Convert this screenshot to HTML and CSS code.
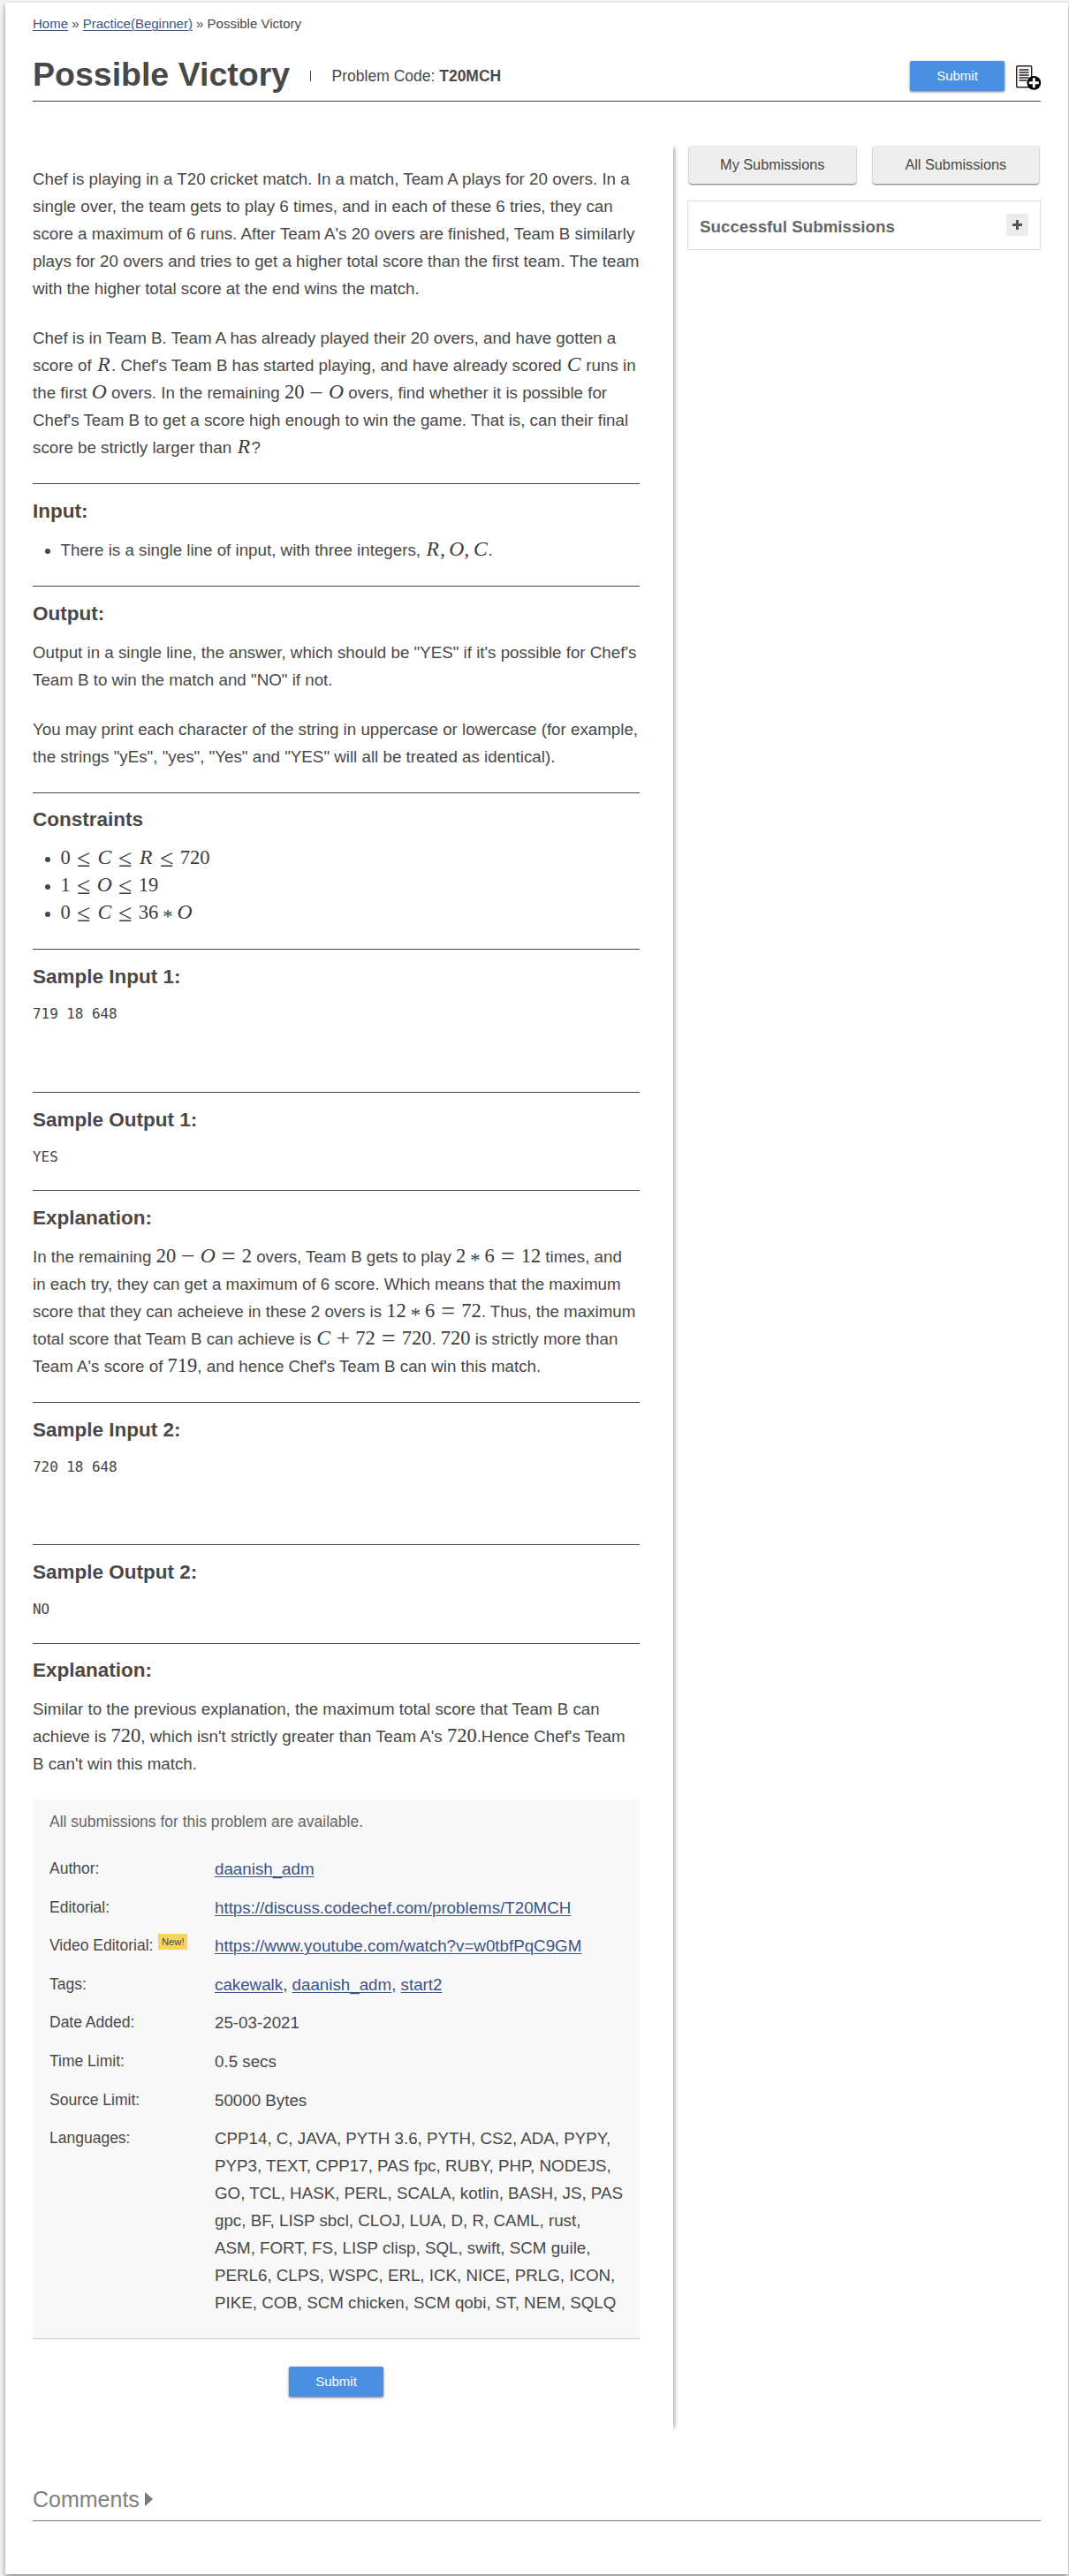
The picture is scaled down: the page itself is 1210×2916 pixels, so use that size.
FILE: index.html
```html
<!DOCTYPE html>
<html lang="en">
<head>
<meta charset="utf-8">
<title>Possible Victory | Practice</title>
<link rel="stylesheet" href="styles.css">
</head>
<body>
<div class="page">
  <nav class="breadcrumb"><a href="#">Home</a> » <a href="#">Practice(Beginner)</a> » Possible Victory</nav>
  <header class="title-bar">
    <h1>Possible Victory</h1>
    <span class="separator"></span>
    <span class="code">Problem Code: <b>T20MCH</b></span>
    <a class="submit">Submit</a>
    <svg class="todo" width="30" height="30" viewBox="0 0 30 30">
      <rect x="1.7" y="1.7" width="17" height="24" rx="1" fill="#fff" stroke="#222" stroke-width="1.4"/>
      <path d="M4.5 6h11M4.5 9h11M4.5 12h11M4.5 15h11M4.5 18h9" stroke="#222" stroke-width="1.5"/>
      <circle cx="21.3" cy="20.8" r="7.9" fill="#000"/>
      <path d="M21.3 15.3v11M15.8 20.8h11" stroke="#fff" stroke-width="3"/>
    </svg>
  </header>
  <div class="columns">
    <main class="problem">
      <div class="intro">
        <p>Chef is playing in a T20 cricket match. In a match, Team A plays for 20 overs. In a<br>single over, the team gets to play 6 times, and in each of these 6 tries, they can<br>score a maximum of 6 runs. After Team A's 20 overs are finished, Team B similarly<br>plays for 20 overs and tries to get a higher total score than the first team. The team<br>with the higher total score at the end wins the match.</p>
        <p>Chef is in Team B. Team A has already played their 20 overs, and have gotten a<br>score of <span class="math"><i>R</i></span>. Chef's Team B has started playing, and have already scored <span class="math"><i>C</i></span> runs in<br>the first <span class="math"><i>O</i></span> overs. In the remaining <span class="math">20<s>−</s><i>O</i></span> overs, find whether it is possible for<br>Chef's Team B to get a score high enough to win the game. That is, can their final<br>score be strictly larger than <span class="math"><i>R</i></span>?</p>
      </div>
      <section>
        <h3>Input:</h3>
        <ul><li>There is a single line of input, with three integers, <span class="math"><i>R</i><u>,</u><i>O</i><u>,</u><i>C</i></span>.</li></ul>
      </section>
      <section>
        <h3>Output:</h3>
        <p>Output in a single line, the answer, which should be "YES" if it's possible for Chef's<br>Team B to win the match and "NO" if not.</p>
        <p>You may print each character of the string in uppercase or lowercase (for example,<br>the strings "yEs", "yes", "Yes" and "YES" will all be treated as identical).</p>
      </section>
      <section>
        <h3>Constraints</h3>
        <ul>
          <li><span class="math">0<em>≤</em><i>C</i><em>≤</em><i>R</i><em>≤</em>720</span></li>
          <li><span class="math">1<em>≤</em><i>O</i><em>≤</em>19</span></li>
          <li><span class="math">0<em>≤</em><i>C</i><em>≤</em>36<b>*</b><i>O</i></span></li>
        </ul>
      </section>
      <section>
        <h3>Sample Input 1:</h3>
        <pre class="sample-in">719 18 648</pre>
      </section>
      <section>
        <h3>Sample Output 1:</h3>
        <pre class="sample-out">YES</pre>
      </section>
      <section>
        <h3>Explanation:</h3>
        <p>In the remaining <span class="math">20<s>−</s><i>O</i><em>=</em>2</span> overs, Team B gets to play <span class="math">2<b>*</b>6<em>=</em>12</span> times, and<br>in each try, they can get a maximum of 6 score. Which means that the maximum<br>score that they can acheieve in these 2 overs is <span class="math">12<b>*</b>6<em>=</em>72</span>. Thus, the maximum<br>total score that Team B can achieve is <span class="math"><i>C</i><s>+</s>72<em>=</em>720</span>. <span class="math">720</span> is strictly more than<br>Team A's score of <span class="math">719</span>, and hence Chef's Team B can win this match.</p>
      </section>
      <section>
        <h3>Sample Input 2:</h3>
        <pre class="sample-in">720 18 648</pre>
      </section>
      <section>
        <h3>Sample Output 2:</h3>
        <pre class="sample-out">NO</pre>
      </section>
      <section>
        <h3>Explanation:</h3>
        <p>Similar to the previous explanation, the maximum total score that Team B can<br>achieve is <span class="math">720</span>, which isn't strictly greater than Team A's <span class="math">720</span>.Hence Chef's Team<br>B can't win this match.</p>
      </section>
      <div class="info">
        <div class="note">All submissions for this problem are available.</div>
        <dl>
          <dt>Author:</dt><dd><a href="#">daanish_adm</a></dd>
          <dt>Editorial:</dt><dd><a href="#">https://discuss.codechef.com/problems/T20MCH</a></dd>
          <dt>Video Editorial: <span class="badge">New!</span></dt><dd><a href="#">https://www.youtube.com/watch?v=w0tbfPqC9GM</a></dd>
          <dt>Tags:</dt><dd><a href="#">cakewalk</a>, <a href="#">daanish_adm</a>, <a href="#">start2</a></dd>
          <dt>Date Added:</dt><dd>25-03-2021</dd>
          <dt>Time Limit:</dt><dd>0.5 secs</dd>
          <dt>Source Limit:</dt><dd>50000 Bytes</dd>
          <dt>Languages:</dt><dd>CPP14, C, JAVA, PYTH 3.6, PYTH, CS2, ADA, PYPY,<br>PYP3, TEXT, CPP17, PAS fpc, RUBY, PHP, NODEJS,<br>GO, TCL, HASK, PERL, SCALA, kotlin, BASH, JS, PAS<br>gpc, BF, LISP sbcl, CLOJ, LUA, D, R, CAML, rust,<br>ASM, FORT, FS, LISP clisp, SQL, swift, SCM guile,<br>PERL6, CLPS, WSPC, ERL, ICK, NICE, PRLG, ICON,<br>PIKE, COB, SCM chicken, SCM qobi, ST, NEM, SQLQ</dd>
        </dl>
      </div>
      <a class="submit bottom">Submit</a>
    </main>
    <div class="divider"></div>
    <aside>
      <div class="tabs"><a>My Submissions</a><a>All Submissions</a></div>
      <div class="panel"><h2>Successful Submissions</h2><span class="plus"></span></div>
    </aside>
  </div>
  <div class="comments">Comments<span class="arrow"></span></div>
</div>
</body>
</html>
```

FILE: styles.css
```css
* { box-sizing: border-box; }
html, body { margin: 0; padding: 0; }
body {
  height: 2916px;
  padding: 3px 1px 2px 6px;
  overflow: hidden;
  background: #f5f5f5;
  color: #484848;
  font-family: "Liberation Sans", Arial, sans-serif;
  font-size: 18.75px;
  line-height: 31px;
}
a { color: #3b5487; text-decoration: underline; text-underline-offset: 2px; text-decoration-thickness: 1px; }
.page {
  display: flex;
  flex-direction: column;
  height: 2911px;
  padding: 12px 31px 0;
  background: #fff;
  box-shadow: 0 3px 6px rgba(0, 0, 0, .45);
}
.breadcrumb { height: 49px; font-size: 15px; line-height: 23px; }
.title-bar {
  display: flex;
  align-items: flex-start;
  height: 51px;
  border-bottom: 1px solid #444;
}
h1 { margin: 0; font-size: 37.5px; line-height: 41px; }
.separator { width: 1px; height: 12px; margin: 16px 24px 0 22.5px; background: #444; }
.code { margin-top: 12px; font-size: 17.5px; line-height: 20px; }
.submit {
  width: 107px;
  height: 34px;
  border-radius: 2px;
  background: #4a90e2;
  box-shadow: 0 1px 3px rgba(0, 0, 0, .55);
  color: #fff;
  font-size: 15px;
  line-height: 34px;
  text-align: center;
  text-decoration: none;
}
.title-bar .submit { margin: 5px 12px 0 auto; }
.todo { width: 30px; height: 30px; margin: 9px -1px 0 0; }

.columns { display: flex; height: 2589px; margin-top: 48px; }
.problem { display: flex; flex-direction: column; width: 687px; margin-right: 38px; padding-top: 24px; }
p { margin: 0 0 25px; white-space: nowrap; }
section { border-top: 1px solid #444; }
h3 { margin: 12.75px 0 11px; font-size: 22.5px; line-height: 35px; }
ul { margin: 0 0 25px; padding-left: 31.5px; }
pre {
  margin: 0;
  padding-top: 1px;
  color: #444;
  font: 15.9px/25px "DejaVu Sans Mono", monospace;
}
.sample-in { height: 101.75px; }
.sample-out { height: 51.5px; }

.math {
  color: #3c3c3c;
  font-family: "Liberation Serif", "Times New Roman", serif;
  font-size: 22.5px;
  line-height: 0;
  white-space: nowrap;
}
.math i {
  display: inline-block;
  width: .724em;
  font-size: 1.05em;
  text-align: center;
}
.math em, .math s {
  display: inline-block;
  width: .622em;
  margin: 0 .222em;
  font-size: 1.25em;
  font-style: normal;
  text-align: center;
  text-decoration: none;
  vertical-align: -.09em;
}
.math s { margin: 0 .178em; }
.math b {
  display: inline-block;
  width: .5em;
  margin: 0 .222em;
  font-weight: normal;
  text-align: center;
  vertical-align: -.22em;
}
.math u { display: inline-block; width: .444em; text-decoration: none; }

.info {
  height: 611px;
  padding: 9.5px 19px 0;
  background: #f8f8f8;
  border-bottom: 1px solid #ccc;
}
.note { height: 53.25px; color: #666; font-size: 17.5px; }
dl { display: grid; grid-template-columns: 187px 1fr; row-gap: 12.6px; margin: 0; white-space: nowrap; }
dt { font-size: 17.5px; }
dd { margin: 0; }
.badge {
  display: inline-block;
  width: 33px;
  height: 18px;
  margin-left: 1px;
  background: #fad35c;
  font-size: 11.25px;
  line-height: 18px;
  text-align: center;
  vertical-align: 6px;
}
.submit.bottom { align-self: center; margin-top: 31px; }

.divider {
  width: 6px;
  background: linear-gradient(to right, #b4b4b4, #e6e6e6 50%, #fff);
  -webkit-mask-image: linear-gradient(transparent, #000 8px, #000 calc(100% - 8px), transparent);
  mask-image: linear-gradient(transparent, #000 8px, #000 calc(100% - 8px), transparent);
}
aside { width: 400px; margin-left: 10px; padding-top: 2px; }
.tabs { display: flex; gap: 19px; padding: 0 2px; }
.tabs a {
  flex: 1;
  height: 43px;
  border-radius: 3px;
  background: #eee;
  box-shadow: 0 1px 2px rgba(0, 0, 0, .6);
  color: #484848;
  font-size: 16.25px;
  line-height: 43px;
  text-align: center;
  text-decoration: none;
}
.panel {
  display: flex;
  justify-content: space-between;
  height: 56px;
  margin-top: 19px;
  padding: 14px 13px 0;
  border: 1px solid #ddd;
}
.panel h2 { margin: 0; color: #666; font-size: 18.75px; line-height: 29px; }
.plus {
  width: 25px;
  height: 25px;
  background:
    linear-gradient(#555, #555) center / 11px 3px no-repeat,
    linear-gradient(#555, #555) center / 3px 11px no-repeat,
    #ececec;
}
.comments {
  display: flex;
  align-items: flex-start;
  height: 43px;
  margin-top: 59px;
  border-bottom: 1px solid #777;
  color: #808080;
  font-size: 25px;
  line-height: 36px;
}
.arrow {
  margin: 10px 0 0 6px;
  border: 8px solid transparent;
  border-left: 9px solid #777;
  border-right: 0;
}
```
